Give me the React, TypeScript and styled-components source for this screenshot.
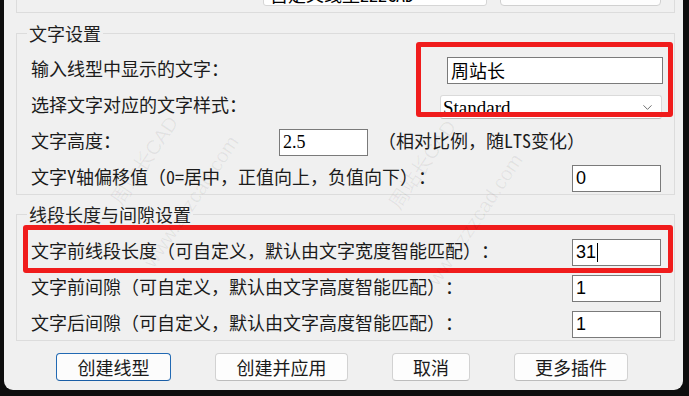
import React, { FC } from 'react'
import styled, { createGlobalStyle } from 'styled-components'
import { ChevronDown } from 'lucide-react'

const GlobalStyle = createGlobalStyle`
	html, body {
		margin: 0;
		padding: 0;
		background: #0e0e0e;
	}
	body {
		font-family: "Noto Sans Mono CJK SC", "Noto Sans CJK SC", "Noto Sans", sans-serif;
		color: #1b1b1b;
		text-spacing-trim: space-all;
	}
`

interface RowProps {
	label: string
	children?: React.ReactNode
}

const FieldRow: FC<RowProps> = ({ label, children }) => (
	<StyledRow>
		<StyledLabel>{label}</StyledLabel>
		{children}
	</StyledRow>
)

const marks = [
	{ text: '周站长CAD', x: 112, y: 192 },
	{ text: 'www.zzzcad.com', x: 144, y: 254 },
	{ text: '周站长CAD', x: 390, y: 196 },
	{ text: 'www.zzzcad.com', x: 428, y: 272 },
]

const App: FC = () => {
	return (
		<>
			<GlobalStyle />
			<StyledScreen>
				<StyledDialog>
					<StyledTopGroup>
						<StyledTopInput>自定义线型ZZZCAD</StyledTopInput>
						<StyledTopButton />
					</StyledTopGroup>

					<StyledGroup>
						<StyledLegend>文字设置</StyledLegend>
						<StyledRows>
							<FieldRow label="输入线型中显示的文字：">
								<StyledInput $w={216} $mr={-2}>
									周站长
								</StyledInput>
							</FieldRow>
							<FieldRow label="选择文字对应的文字样式：">
								<StyledCombo>
									<span>Standard</span>
									<ChevronDown size={15} strokeWidth={1.4} color="#5a5a5a" />
								</StyledCombo>
							</FieldRow>
							<StyledRow>
								<StyledLabel $w={248}>文字高度：</StyledLabel>
								<StyledInput $w={89} $serif $auto={false}>
									2.5
								</StyledInput>
								<StyledNote>（相对比例，随LTS变化）</StyledNote>
							</StyledRow>
							<FieldRow label="文字Y轴偏移值（0=居中，正值向上，负值向下）：">
								<StyledInput $w={89}>0</StyledInput>
							</FieldRow>
						</StyledRows>
						<StyledMark $x={399} $y={-3} $w={257} $h={75} />
					</StyledGroup>

					<StyledGroup $gap={7}>
						<StyledLegend>线段长度与间隙设置</StyledLegend>
						<StyledRows $top={6}>
							<FieldRow label="文字前线段长度（可自定义，默认由文字宽度智能匹配）：">
								<StyledInput $w={89}>
									31
									<StyledCaret />
								</StyledInput>
							</FieldRow>
							<FieldRow label="文字前间隙（可自定义，默认由文字高度智能匹配）：">
								<StyledInput $w={89}>1</StyledInput>
							</FieldRow>
							<FieldRow label="文字后间隙（可自定义，默认由文字高度智能匹配）：">
								<StyledInput $w={89}>1</StyledInput>
							</FieldRow>
						</StyledRows>
						<StyledMark $x={6} $y={-1} $w={650} $h={48} />
					</StyledGroup>

					<StyledButtonBar>
						<StyledButton $w={115} $primary>
							创建线型
						</StyledButton>
						<StyledButton $w={133}>创建并应用</StyledButton>
						<StyledButton $w={78}>取消</StyledButton>
						<StyledButton $w={114}>更多插件</StyledButton>
					</StyledButtonBar>

					{marks.map((m, i) => (
						<StyledWatermark key={i} $x={m.x} $y={m.y}>
							{m.text}
						</StyledWatermark>
					))}
				</StyledDialog>
			</StyledScreen>
		</>
	)
}

export default App

const StyledScreen = styled.div`
	width: 689px;
	height: 396px;
	padding-left: 4px;
	box-sizing: border-box;
	background: #0e0e0e;
	overflow: hidden;
`

const StyledDialog = styled.div`
	position: relative;
	width: 679px;
	height: 390px;
	box-sizing: border-box;
	padding: 0 8px 0 12px;
	background: #f0f0f0;
	border-radius: 0 0 9px 9px;
	overflow: hidden;
	display: flex;
	flex-direction: column;
`

const StyledTopGroup = styled.div`
	height: 12px;
	display: flex;
	align-items: flex-end;
	border: 1px solid #dcdcdc;
	border-top: none;
	overflow: hidden;
`

const StyledTopInput = styled.div`
	flex: none;
	width: 224px;
	height: 27px;
	margin: 0 0 6px 246px;
	box-sizing: border-box;
	padding: 0 6px;
	background: #fff;
	border: 1px solid #d6d6d6;
	border-radius: 0 0 3px 3px;
	font-size: 18px;
	line-height: 28px;
	color: #000;
	white-space: nowrap;
	overflow: hidden;
`

const StyledTopButton = styled.div`
	flex: none;
	width: 161px;
	height: 27px;
	margin: 0 0 6px 13px;
	box-sizing: border-box;
	background: #fdfdfd;
	border: 1px solid #d0d0d0;
	border-radius: 0 0 4px 4px;
`

const StyledGroup = styled.fieldset<{ $gap?: number }>`
	position: relative;
	margin: ${(p) => p.$gap ?? 8}px 0 0;
	padding: 0 13px 0 14px;
	min-width: 0;
	border: 1px solid #dcdcdc;
`

const StyledLegend = styled.legend`
	margin-left: -4px;
	padding: 0 2px;
	font-size: 18px;
	line-height: 24px;
	color: #1f1f1f;
`

const StyledRows = styled.div<{ $top?: number }>`
	display: flex;
	flex-direction: column;
	padding-top: ${(p) => p.$top ?? 5}px;
`

const StyledRow = styled.div`
	height: 36px;
	display: flex;
	align-items: center;
`

const StyledLabel = styled.span<{ $w?: number }>`
	flex: none;
	${(p) => (p.$w ? `width: ${p.$w}px;` : '')}
	font-size: 18px;
	line-height: 24px;
	white-space: nowrap;
	color: #1b1b1b;
`

const StyledInput = styled.div<{ $w: number; $mr?: number; $serif?: boolean; $auto?: boolean }>`
	flex: none;
	display: flex;
	align-items: center;
	width: ${(p) => p.$w}px;
	height: 27px;
	margin-top: 4px;
	margin-left: ${(p) => (p.$auto === false ? '0' : 'auto')};
	margin-right: ${(p) => p.$mr ?? 0}px;
	box-sizing: border-box;
	padding: 0 3px;
	background: #fff;
	border: 1px solid #7a7a7a;
	font-family: ${(p) =>
		p.$serif ? '"Liberation Serif", serif' : '"Liberation Sans", "Noto Sans CJK SC", sans-serif'};
	font-size: 18px;
	color: #000;
	white-space: nowrap;
`

const StyledCaret = styled.span`
	display: inline-block;
	width: 1px;
	height: 19px;
	margin-left: 1px;
	background: #000;
`

const StyledCombo = styled.div`
	flex: none;
	display: flex;
	align-items: center;
	justify-content: space-between;
	width: 222px;
	height: 24px;
	margin: 6px -1px 0 auto;
	box-sizing: border-box;
	padding: 0 6px 0 2px;
	background: #fff;
	border: 1px solid #dadada;
	border-bottom-color: #bcbcbc;
	border-radius: 3px;
	font-family: "Liberation Serif", serif;
	font-size: 19px;
	color: #000;
	span {
		height: 22px;
		line-height: 24px;
		overflow: hidden;
	}
`

const StyledNote = styled.span`
	margin-left: 10px;
	font-size: 18px;
	line-height: 24px;
	white-space: nowrap;
	color: #1b1b1b;
`

const StyledMark = styled.div<{ $x: number; $y: number; $w: number; $h: number }>`
	position: absolute;
	left: ${(p) => p.$x}px;
	top: ${(p) => p.$y}px;
	width: ${(p) => p.$w}px;
	height: ${(p) => p.$h}px;
	box-sizing: border-box;
	border: 5px solid #f01c1c;
	border-radius: 3px;
	pointer-events: none;
`

const StyledButtonBar = styled.div`
	display: flex;
	gap: 44px;
	margin: 12px 0 0 40px;
`

const StyledButton = styled.button<{ $w: number; $primary?: boolean }>`
	width: ${(p) => p.$w}px;
	height: 28px;
	padding: 0;
	box-sizing: border-box;
	background: ${(p) => (p.$primary ? '#fcfcfc' : '#fdfdfd')};
	border: 1px solid ${(p) => (p.$primary ? '#2169b3' : '#d2d2d2')};
	border-bottom-color: ${(p) => (p.$primary ? '#1a5ea6' : '#bdbdbd')};
	border-radius: 4px;
	font-family: "Noto Sans CJK SC", sans-serif;
	font-size: 18px;
	line-height: 24px;
	color: #1b1b1b;
`

const StyledWatermark = styled.span<{ $x: number; $y: number }>`
	position: absolute;
	left: ${(p) => p.$x}px;
	top: ${(p) => p.$y}px;
	transform: rotate(-56deg);
	transform-origin: left center;
	font-family: "Liberation Sans", "Noto Sans CJK SC", sans-serif;
	font-size: 20px;
	line-height: 22px;
	color: rgba(0, 0, 0, 0.06);
	white-space: nowrap;
	pointer-events: none;
`
